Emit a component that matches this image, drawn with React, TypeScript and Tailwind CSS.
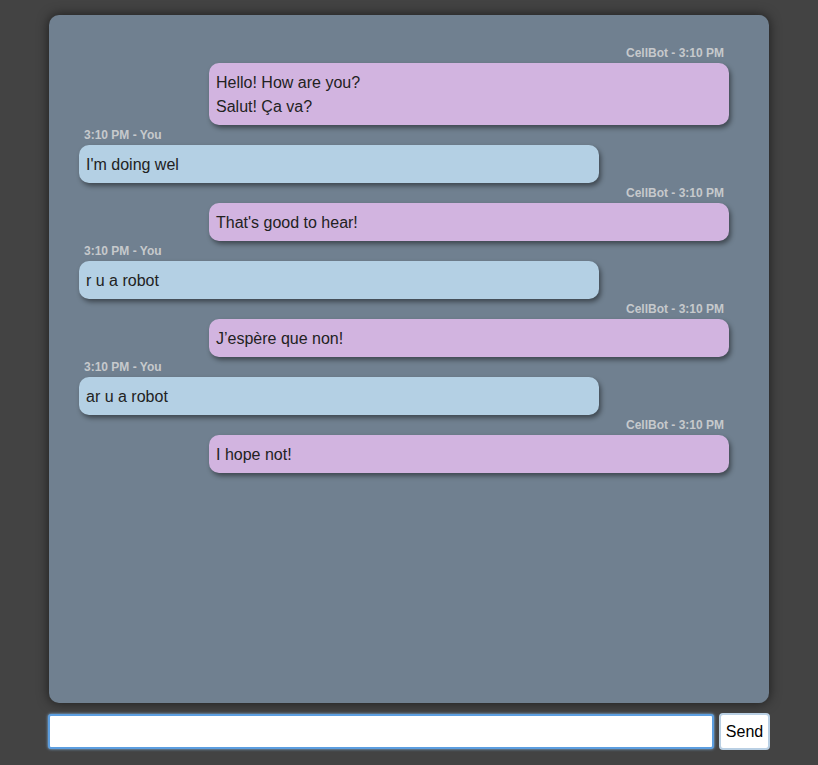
import React from "react"

interface Message {
    from: "bot" | "you"
    lines: string[]
}

const messages: Message[] = [
    { from: "bot", lines: ["Hello! How are you?", "Salut! Ça va?"] },
    { from: "you", lines: ["I'm doing wel"] },
    { from: "bot", lines: ["That's good to hear!"] },
    { from: "you", lines: ["r u a robot"] },
    { from: "bot", lines: ["J’espère que non!"] },
    { from: "you", lines: ["ar u a robot"] },
    { from: "bot", lines: ["I hope not!"] }
]

function Bubble({ message }: { message: Message }) {
    const bot = message.from === "bot"
    return (
        <div className={bot ? "flex flex-col items-end pr-[10px]" : "flex flex-col items-start"}>
            <div
                className={
                    bot
                        ? "mr-[5px] text-[12px] font-bold leading-[14px] text-[#c6c9cc]"
                        : "ml-[5px] text-[12px] font-bold leading-[14px] text-[#c6c9cc]"
                }
            >
                {bot ? "CellBot - 3:10 PM" : "3:10 PM - You"}
            </div>
            <div
                className={
                    bot
                        ? "mt-[3px] w-[520px] rounded-[10px] bg-[#d2b4e0] px-[7px] pb-[6px] pt-[8px] text-[16px] leading-6 text-[#222] shadow-[2px_3px_5px_rgba(0,0,0,0.45)]"
                        : "mt-[3px] w-[520px] rounded-[10px] bg-[#b4d0e4] px-[7px] pb-[6px] pt-[8px] text-[16px] leading-6 text-[#222] shadow-[2px_3px_5px_rgba(0,0,0,0.45)]"
                }
            >
                {message.lines.map((line) => (
                    <div key={line}>{line}</div>
                ))}
            </div>
        </div>
    )
}

export default function App() {
    return (
        <div className="flex min-h-[765px] flex-col items-center bg-[#434343] pt-[15px] font-['Liberation_Sans',Arial,sans-serif]">
            <div className="flex h-[688px] w-[720px] flex-col gap-[3px] rounded-[10px] bg-[#708090] pl-[30px] pr-[30px] pt-[31px] shadow-[0_0_12px_rgba(0,0,0,0.6)]">
                {messages.map((m, i) => (
                    <Bubble key={i} message={m} />
                ))}
            </div>
            <div className="mt-[10px] flex w-[722px] items-start gap-[5px]">
                <input
                    className="mt-px h-[35px] flex-1 rounded-[3px] border-2 border-[#5c9ee0] bg-white px-2 text-[16px] outline-none shadow-[0_0_3px_#8ec0f0]"
                    autoFocus
                />
                <button className="h-[37px] w-[51px] rounded-[4px] border-2 border-[#b9cfe3] bg-white text-[16px] text-black">
                    Send
                </button>
            </div>
        </div>
    )
}
